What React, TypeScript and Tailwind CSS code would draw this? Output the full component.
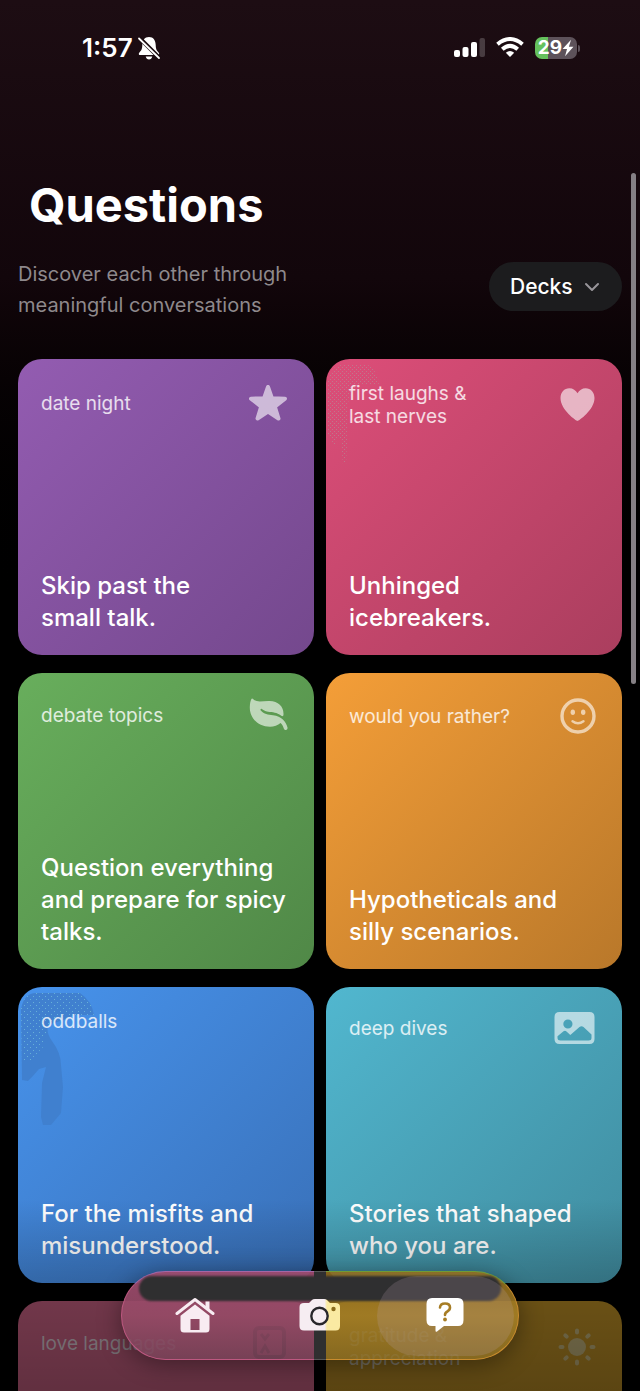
import React from 'react';
import { ChevronDown } from 'lucide-react';

interface Deck {
  id: string;
  label: string[];
  title?: string[];
  background: string;
  labelColor: string;
  icon?: React.ReactNode;
  decoration?: React.ReactNode;
}

const StarIcon = () => (
  <svg width="42" height="42" viewBox="0 0 42 42" className="mr-0.5 text-white opacity-60" fill="currentColor" stroke="currentColor" strokeWidth="4" strokeLinejoin="round" aria-hidden="true">
    <path d="M21 5 L25 16.3 L38 16.7 L27.8 24.6 L31.5 36.5 L21 29.6 L10.5 36.5 L14.2 24.6 L4 16.7 L17 16.3 Z" />
  </svg>
);

const HeartIcon = () => (
  <svg width="36" height="36" viewBox="0 0 36 36" className="mr-[3px] text-white/60" fill="currentColor" aria-hidden="true">
    <path d="M17.5 34 C16.5 34 0.5 23 0.5 11 C0.5 5.3 4.3 1.3 9.3 1.3 C13 1.3 15.8 3.3 17.5 6.3 C19.2 3.3 22 1.3 25.7 1.3 C30.7 1.3 34.5 5.3 34.5 11 C34.5 23 18.5 34 17.5 34 Z" />
  </svg>
);

const LeafIcon = () => (
  <svg width="40" height="38" viewBox="0 0 40 38" className="mr-0.5 text-white/60" aria-hidden="true">
    <path
      fill="currentColor"
      d="M2.3 3.2 C2.7 2.4 3.5 2.4 4.3 3.2 C8 6.8 13.5 4.8 20.5 5 C29.5 5.2 34.8 10.5 34.5 18.5 C34.5 20 33.5 20.6 32.3 19.8 C27.5 16 24 16.6 19 15.8 C16 15.2 14.3 14 12.8 13 C11.8 12.5 11 13.5 11.8 14.5 C15 18.3 19 18.6 24 19.3 C32.5 20.5 37 25.5 38.5 31.5 C39 34.5 35.8 35 34.8 32.5 C34 30 33 28.2 31.5 27 C29 29.3 25 30.7 21 30.7 C9 30.7 0.5 22 0.8 11 C0.9 7.5 1.4 5.2 2.3 3.2 Z"
    />
  </svg>
);

const SmileIcon = () => (
  <svg width="36" height="40" viewBox="0 0 36 40" className="mr-[3px] text-white/60" fill="none" stroke="currentColor" strokeLinecap="round" aria-hidden="true">
    <circle cx="18" cy="20" r="16" strokeWidth="3.4" />
    <ellipse cx="12.8" cy="16.3" rx="2.2" ry="2.7" fill="currentColor" stroke="none" />
    <ellipse cx="23.2" cy="16.3" rx="2.2" ry="2.7" fill="currentColor" stroke="none" />
    <path d="M12.5 25.2 Q18 29.2 23.5 25.2" strokeWidth="2.4" />
  </svg>
);

const PictureIcon = () => (
  <svg width="42" height="36" viewBox="0 0 42 36" className="mr-[3px] text-white/60" aria-hidden="true">
    <path
      fill="currentColor"
      fillRule="evenodd"
      d="M5.5 2 H35.5 Q40.5 2 40.5 7 V29 Q40.5 34 35.5 34 H5.5 Q0.5 34 0.5 29 V7 Q0.5 2 5.5 2 Z M13.9 9.4 A4.6 4.6 0 1 0 13.9 18.6 A4.6 4.6 0 1 0 13.9 9.4 Z M3.5 28 V26.2 L9.5 21.3 Q11.1 20.2 12.5 21.5 L16.3 25 L25.5 17 Q27.5 15.5 29.5 17 L37.5 24.5 V28 Q37.5 30.5 34.5 30.5 H6.5 Q3.5 30.5 3.5 28 Z"
    />
  </svg>
);

const CardsIcon = () => (
  <svg width="34" height="38" viewBox="0 0 34 38" className="mr-1 text-[#20282a]" fill="none" stroke="currentColor" strokeWidth="4" aria-hidden="true">
    <rect x="2" y="4" width="29" height="29" rx="4" />
    <path d="M8 10 L12 15 L16 10 M8 29 L12 22 L16 29" strokeWidth="3" />
  </svg>
);

const SunIcon = () => (
  <svg width="40" height="40" viewBox="0 0 40 40" className="mr-0.5 text-[#92865c]" fill="currentColor" stroke="currentColor" strokeWidth="4" strokeLinecap="round" aria-hidden="true">
    <circle cx="20" cy="20" r="9" stroke="none" />
    <path d="M20 3.5 V5.5 M20 34.5 V36.5 M3.5 20 H5.5 M34.5 20 H36.5 M8.3 8.3 L9.7 9.7 M30.3 30.3 L31.7 31.7 M8.3 31.7 L9.7 30.3 M30.3 9.7 L31.7 8.3" />
  </svg>
);

// Soft paint drips in the corner of a card
const PinkDrip = () => (
  <svg className="absolute top-0 left-0" width="60" height="120" viewBox="0 0 60 120" aria-hidden="true">
    <defs>
      <pattern id="pink-dots" width="4" height="4" patternUnits="userSpaceOnUse">
        <rect width="1" height="1" fill="#a8a0a0" />
        <rect x="2" y="2" width="1" height="1" fill="#a8a0a0" />
      </pattern>
    </defs>
    <path fill="url(#pink-dots)" opacity="0.5" d="M2 22 Q5 6 16 6 H42 Q52 12 53 26 H32 Q21 34 21 56 V84 L20 106 H17 L15 80 L11 78 L9 88 L7 86 L5 78 H2 Z" />
  </svg>
);

const BlueDrip = () => (
  <svg className="absolute top-0 left-0" width="90" height="150" viewBox="0 0 90 150" aria-hidden="true">
    <defs>
      <pattern id="blue-dots" width="6" height="6" patternUnits="userSpaceOnUse">
        <rect width="1" height="1" fill="#67b0d8" />
        <rect x="3" y="3" width="1" height="1" fill="#67b0d8" />
      </pattern>
    </defs>
    <path fill="#4080cf" d="M3 22 Q6 6 18 6 H62 Q74 14 76 28 H56 L48 32 L30 38 Q28 46 34 54 Q43 66 43 78 L45 100 L43 126 L38 132 L33 138 H25 L23 130 L24 96 L28 80 L21 82 L14 90 L10 94 L4 93 Z" />
    <path fill="url(#blue-dots)" d="M3 22 Q6 6 18 6 H62 Q74 14 76 28 H50 L30 38 L25 60 L12 74 L4 76 Z" />
  </svg>
);

const decks: Deck[] = [
  {
    id: 'date-night',
    label: ['date night'],
    title: ['Skip past the', 'small talk.'],
    background: 'bg-linear-to-br from-[#935cb1] to-[#74488d]',
    labelColor: 'text-white/80',
    icon: <StarIcon />,
  },
  {
    id: 'icebreakers',
    label: ['first laughs &', 'last nerves'],
    title: ['Unhinged', 'icebreakers.'],
    background: 'bg-linear-to-br from-[#dd4e79] to-[#aa3e5e]',
    labelColor: 'text-white/80',
    icon: <HeartIcon />,
    decoration: <PinkDrip />,
  },
  {
    id: 'debate-topics',
    label: ['debate topics'],
    title: ['Question everything', 'and prepare for spicy', 'talks.'],
    background: 'bg-linear-to-br from-[#68ae5c] to-[#508847]',
    labelColor: 'text-white/80',
    icon: <LeafIcon />,
  },
  {
    id: 'would-you-rather',
    label: ['would you rather?'],
    title: ['Hypotheticals and', 'silly scenarios.'],
    background: 'bg-linear-to-br from-[#f49e38] to-[#b9782a]',
    labelColor: 'text-white/80',
    icon: <SmileIcon />,
  },
  {
    id: 'oddballs',
    label: ['oddballs'],
    title: ['For the misfits and', 'misunderstood.'],
    background: 'bg-linear-to-br from-[#4793ec] to-[#3970b8]',
    labelColor: 'text-white/80',
    decoration: <BlueDrip />,
  },
  {
    id: 'deep-dives',
    label: ['deep dives'],
    title: ['Stories that shaped', 'who you are.'],
    background: 'bg-linear-to-br from-[#51b7cf] to-[#408c9f]',
    labelColor: 'text-white/80',
    icon: <PictureIcon />,
  },
  {
    id: 'love-languages',
    label: ['love languages'],
    background: 'bg-[#964962]',
    labelColor: 'text-[#a3989f]',
    icon: <CardsIcon />,
  },
  {
    id: 'gratitude',
    label: ['gratitude &', 'appreciation'],
    background: 'bg-[#8c6a1c]',
    labelColor: 'text-[#a39a86]',
    icon: <SunIcon />,
  },
];

const Lines = ({ lines }: { lines: string[] }) => (
  <>
    {lines.map(line => (
      <span key={line} className="block whitespace-nowrap">{line}</span>
    ))}
  </>
);

const DeckCard = ({ deck }: { deck: Deck }) => (
  <a href={`#${deck.id}`} className={`relative flex aspect-square flex-col justify-between overflow-hidden rounded-3xl px-[23px] pt-[23px] pb-[21px] ${deck.background}`}>
    {deck.decoration}
    <div className="relative flex items-center justify-between">
      <p className={`text-[19px] leading-[23px] ${deck.labelColor}`}>
        <Lines lines={deck.label} />
      </p>
      {deck.icon}
    </div>
    {deck.title && (
      <h2 className="relative text-2xl leading-8 font-medium text-white">
        <Lines lines={deck.title} />
      </h2>
    )}
  </a>
);

const StatusBar = () => (
  <div className="flex h-24 items-center justify-between pr-[60px] pl-[82px] text-white">
    <div className="flex items-center gap-1">
      <span className="text-[26px] leading-8 font-semibold">1:57</span>
      <svg width="24" height="26" viewBox="0 0 24 26" fill="currentColor" aria-hidden="true">
        <path d="M12 2 C7.5 2 5.5 5.5 5.3 10 C5.2 14.5 4.2 15.5 2.4 17.4 C1.2 18.8 1.8 20 3.3 20 H20.7 C22.2 20 22.8 18.8 21.6 17.4 C19.8 15.5 18.8 14.5 18.7 10 C18.5 5.5 16.5 2 12 2 Z M8.7 21.5 H15.3 Q14.5 24.5 12 24.5 Q9.5 24.5 8.7 21.5 Z" />
        <path d="M2.5 3 L22 22.5" stroke="#1b0c11" strokeWidth="4" />
        <path d="M2 3.5 L22 23" stroke="currentColor" strokeWidth="1.8" strokeLinecap="round" />
      </svg>
    </div>
    <div className="flex items-center gap-[11px]">
      <svg width="32" height="22" viewBox="0 0 32 22" fill="currentColor" aria-hidden="true">
        <rect x="1" y="13" width="6" height="7" rx="2" />
        <rect x="9.5" y="10" width="6" height="10" rx="2" />
        <rect x="18" y="5" width="6" height="15" rx="2" />
        <rect x="26.5" y="1" width="5.5" height="19" rx="2" opacity="0.2" />
      </svg>
      <svg width="28" height="22" viewBox="0 0 28 22" fill="none" stroke="currentColor" strokeWidth="4" aria-hidden="true">
        <path d="M1.5 7.2 Q14 -3.1 26.5 7.2" />
        <path d="M6.3 12.2 Q14 5.5 21.7 12.2" />
        <path d="M14 20 L9.8 15.8 Q14 12.4 18.2 15.8 Z" fill="currentColor" stroke="none" />
      </svg>
      <div className="flex items-center gap-px">
        <div className="flex h-[22px] w-[42px] items-center justify-center rounded-[7px] bg-linear-to-r from-[#65c15d] from-30% to-[#5d525a] to-30%">
          <span className="text-[19px] leading-[22px] font-bold">29</span>
          <svg width="12" height="18" viewBox="0 0 11 16" fill="currentColor" aria-hidden="true">
            <path d="M8.3 0.5 L0.5 9 H4.6 L2.8 15.5 L10.5 6.8 H6.3 Z" />
          </svg>
        </div>
        <div className="h-[7px] w-0.5 rounded-r-sm bg-[#5d525a]" />
      </div>
    </div>
  </div>
);

const TabBar = () => (
  <nav className="absolute bottom-[31px] left-1/2 h-[89px] w-[398px] -translate-x-1/2 rounded-full shadow-[0_4px_24px_rgba(0,0,0,0.4)]">
    {/* Tinted glass */}
    <div className="absolute inset-0 flex">
      <div className="flex-1 rounded-l-full border border-r-0 border-[#bd5880] border-t-[#a566a5] bg-linear-to-b from-[#9c4a6d]/95 via-[#974b67]/90 to-[#7a4359]/85" />
      <div className="w-3 border-y border-[#555] bg-[#2f2f30]" />
      <div className="flex-1 rounded-r-full border border-l-0 border-[#c98c2e] border-t-[#719b35] bg-linear-to-b from-[#916c1d]/90 via-[#a98226]/85 to-[#8f7023]/80" />
    </div>
    <div className="absolute inset-x-[18px] top-[5px] h-[25px] rounded-full bg-[#2f2f30] blur-[1px]" />
    <div className="relative grid h-full grid-cols-3 px-[11px] text-white">
      <button type="button" aria-label="Home" className="flex items-center justify-center pb-0.5">
        <svg width="40" height="36" viewBox="0 0 40 36" className="text-[#f8ecf2]" aria-hidden="true">
          <path d="M2 16.5 L20 2.5 L38 16.5" fill="none" stroke="currentColor" strokeWidth="3" strokeLinecap="round" strokeLinejoin="round" />
          <path d="M30.5 4.5 H34.5 V13 L30.5 10 Z" fill="currentColor" />
          <path fill="currentColor" fillRule="evenodd" d="M20 7.5 L34.5 18.8 V32 Q34.5 35.5 31 35.5 H9 Q5.5 35.5 5.5 32 V18.8 Z M15.5 22 V33 H24.5 V22 Z" />
        </svg>
      </button>
      <button type="button" aria-label="Camera" className="flex items-center justify-center pb-0.5">
        <svg width="42" height="34" viewBox="0 0 42 34" aria-hidden="true">
          <defs>
            <linearGradient id="camera-fill">
              <stop offset="0.62" stopColor="#f6edf2" />
              <stop offset="0.68" stopColor="#faeaa2" />
            </linearGradient>
          </defs>
          <path fill="url(#camera-fill)" d="M5 5 H10 L13 2 Q14 1 16 1 H25 Q27 1 28 2 L31 5 H36.5 Q41 5 41 9 V28 Q41 32.5 36.5 32.5 H5 Q0.5 32.5 0.5 28 V9 Q0.5 5 5 5 Z" />
          <circle cx="20.5" cy="18" r="8.2" fill="#f6edf2" stroke="#29272b" strokeWidth="2.4" />
          <circle cx="34.5" cy="11" r="2.2" fill="#8a6b1c" />
        </svg>
      </button>
      <button type="button" aria-label="Questions" aria-current="page" className="relative flex items-center justify-center pb-0.5">
        <span className="absolute -inset-x-[6px] top-[5px] bottom-1 rounded-full bg-[#bda5b5]/20" />
        <svg width="38" height="36" viewBox="0 0 38 36" className="relative" aria-hidden="true">
          <path fill="currentColor" d="M6 1 H32 Q37.5 1 37.5 7 V23 Q37.5 29 32 29 H18 L11 34.5 Q9.5 35.5 9.5 33.5 V29 H6 Q0.5 29 0.5 23 V7 Q0.5 1 6 1 Z" />
          <path d="M14 10.5 Q14.3 6.5 19 6.5 Q24 6.5 24 10.5 Q24 13 21.3 14.5 Q19 15.7 19 18" fill="none" stroke="#a77d25" strokeWidth="2.6" strokeLinecap="round" />
          <circle cx="19" cy="22.5" r="1.9" fill="#a77d25" />
        </svg>
      </button>
    </div>
  </nav>
);

const App = () => (
  <div className="relative h-screen overflow-hidden bg-black bg-linear-to-b from-[#1d0d13] via-[#12060b] via-20% to-black to-45% font-[Inter,'Liberation_Sans',sans-serif]">
    <StatusBar />

    <main className="px-[18px] pt-[79px]">
      <h1 className="px-[11px] text-[47px] leading-[60px] font-bold text-white">Questions</h1>

      <div className="mt-6 flex items-start justify-between">
        <p className="max-w-[300px] text-xl leading-[31px] text-[#8e898c]">
          Discover each other through meaningful conversations
        </p>
        <div className="relative mt-[3px]">
          <select aria-label="View" className="block h-[49px] w-[133px] appearance-none rounded-full bg-[#1c1c1e] pl-[21px] text-[21px] leading-7 font-medium text-white">
            <option>Decks</option>
          </select>
          <ChevronDown className="pointer-events-none absolute top-[13px] right-[18px] h-6 w-6 text-[#98959a]" />
        </div>
      </div>

      <div className="mt-[38px] grid grid-cols-2 gap-x-3 gap-y-[18px]">
        {decks.map(deck => (
          <DeckCard key={deck.id} deck={deck} />
        ))}
      </div>
    </main>

    {/* Scroll indicator */}
    <div className="absolute top-[173px] right-1 h-[511px] w-[5px] rounded-full bg-[#858085]" />

    {/* Fade behind the tab bar */}
    <div className="pointer-events-none absolute inset-x-0 bottom-0 h-48 bg-linear-to-b from-transparent via-black/25 via-55% to-black/35" />

    <TabBar />
  </div>
);

export default App;
